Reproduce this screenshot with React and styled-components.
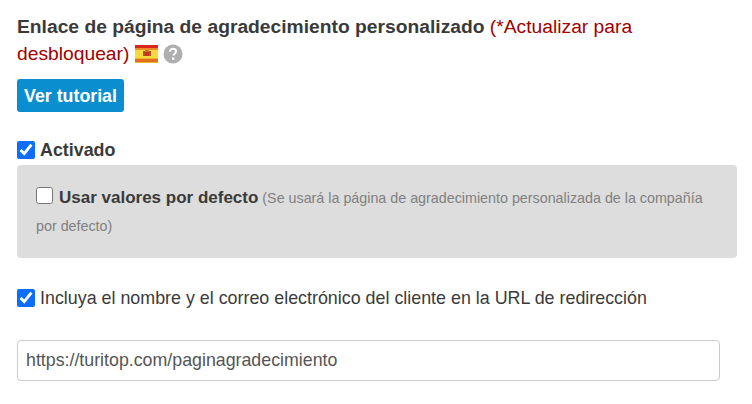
import React from 'react'
import styled, { createGlobalStyle } from 'styled-components'

const GlobalStyle = createGlobalStyle`
    html, body {
        margin: 0;
        padding: 0;
        background: #fff;
    }
    body {
        font-family: "Liberation Sans", Arial, sans-serif;
        color: #333;
    }
`

const Page = styled.div`
    width: 752px;
    height: 404px;
    box-sizing: border-box;
    padding: 13px 15px 0 17px;
    overflow: hidden;
`

const Title = styled.div`
    font-size: 19.26px;
    line-height: 27px;
    width: 700px;
    font-weight: 700;
    color: #3a3a3a;
`

const Upgrade = styled.span`
    font-weight: 400;
    color: #a00000;
`

const Flag = styled.svg`
    width: 23px;
    height: 18px;
    margin: 0 5px 0 0;
    vertical-align: -3px;
`

const Help = styled.svg`
    width: 20px;
    height: 20px;
    vertical-align: -4px;
`

const TutorialButton = styled.a`
    display: block;
    width: 107px;
    height: 33px;
    margin-top: 12px;
    background: #0b8ecf;
    border-radius: 3px;
    color: #fff;
    font-size: 17.8px;
    font-weight: 700;
    line-height: 34px;
    text-align: center;
`

const CheckRow = styled.label`
    display: flex;
    align-items: center;
    gap: 5px;
    font-size: 17.87px;
    font-weight: ${p => (p.$bold ? 700 : 400)};
    color: #3a3a3a;
    margin-top: ${p => p.$top || 0}px;
    line-height: 24px;
`

const Check = styled.input.attrs({ type: 'checkbox' })`
    width: 18px;
    height: 18px;
    margin: 0;
    accent-color: #0d6efd;
`

const Panel = styled.div`
    background: #dddddd;
    border-radius: 4px;
    margin-top: 3px;
    width: 720px;
    height: 93px;
    box-sizing: border-box;
    padding: 19px 19px 0;
    line-height: 28px;
    font-size: 14.3px;
    color: #808080;
`

const PanelLabel = styled.span`
    font-size: 17px;
    font-weight: 700;
    color: #3a3a3a;
`

const PanelCheck = styled(Check)`
    width: 17px;
    height: 17px;
    margin: 0 6px 0 0;
    vertical-align: -1px;
`

const UrlInput = styled.input`
    display: block;
    width: 703px;
    height: 41px;
    box-sizing: border-box;
    margin-top: 30px;
    padding: 0 8px;
    border: 1px solid #ccc;
    border-radius: 4px;
    font-family: "Liberation Sans", Arial, sans-serif;
    font-size: 17.8px;
    color: #555;
    background: #fff;
`

const SpainFlag = () => (
    <Flag viewBox="0 0 23 18">
        <rect width="23" height="18" fill="#f5dc3c" />
        <rect width="23" height="3" fill="#d8261c" />
        <rect y="3" width="23" height="2" fill="#ee8a2a" />
        <rect y="13" width="23" height="1" fill="#f0b030" />
        <rect y="14" width="23" height="3" fill="#e0701c" />
        <rect y="17" width="23" height="1" fill="#f0b030" />
        <rect x="8" y="6" width="2" height="5" fill="#b5502a" />
        <rect x="10" y="5" width="4" height="2" fill="#c9772e" />
        <rect x="10" y="7" width="4" height="4" fill="#c8321e" />
        <rect x="14" y="6" width="2" height="5" fill="#b5502a" />
    </Flag>
)

const HelpIcon = () => (
    <Help viewBox="0 0 20 20">
        <circle cx="10" cy="10" r="9.5" fill="#aeaeae" />
        <path d="M7 7.8c0-1.9 1.3-3 3.1-3 1.8 0 3 1 3 2.6 0 2.2-2.6 2.3-2.6 4.2" fill="none" stroke="#fff" strokeWidth="2" />
        <rect x="9" y="13.4" width="2.4" height="2.4" fill="#fff" />
    </Help>
)

export default function App() {
    return (
        <Page>
            <GlobalStyle />
            <Title>
                Enlace de página de agradecimiento personalizado{' '}
                <Upgrade>(*Actualizar para desbloquear)</Upgrade> <SpainFlag />
                <HelpIcon />
            </Title>
            <TutorialButton>Ver tutorial</TutorialButton>
            <CheckRow $bold $top={26}>
                <Check defaultChecked />
                Activado
            </CheckRow>
            <Panel>
                <PanelCheck />
                <PanelLabel>Usar valores por defecto</PanelLabel> (Se usará la página de agradecimiento personalizada de la compañía por defecto)
            </Panel>
            <CheckRow $top={28}>
                <Check defaultChecked />
                Incluya el nombre y el correo electrónico del cliente en la URL de redirección
            </CheckRow>
            <UrlInput defaultValue="https://turitop.com/paginagradecimiento" />
        </Page>
    )
}
